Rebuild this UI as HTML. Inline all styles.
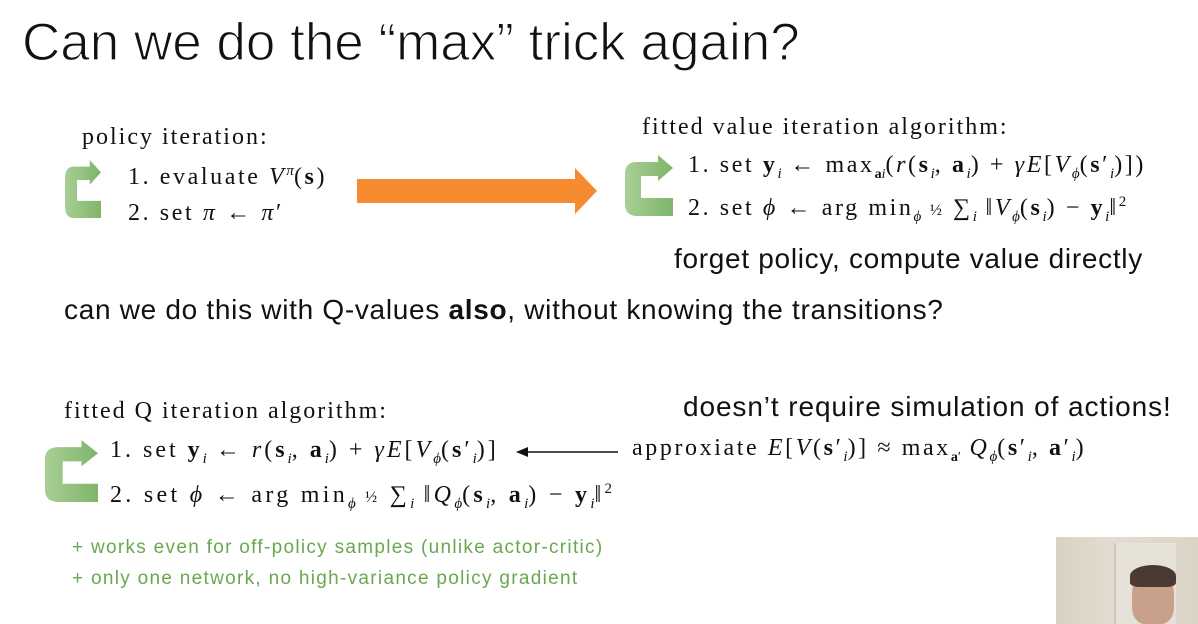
<!DOCTYPE html>
<html><head><meta charset="utf-8"><style>
body{margin:0;width:1198px;height:624px;background:#fff;position:relative;overflow:hidden;font-family:"Liberation Serif",serif;color:#111}
.a{position:absolute;white-space:nowrap}
.s{font-family:"Liberation Sans",sans-serif}
.m{font-size:24px;letter-spacing:2.6px}
.m sub,.m sup{letter-spacing:0}
.g{color:#6aa84f;font-family:"Liberation Sans",sans-serif;font-size:19px;letter-spacing:1.3px}
</style></head><body>
<svg width="0" height="0" style="position:absolute"><defs><linearGradient id="gr" x1="0" x2="1"><stop offset="0" stop-color="#a9cf95"/><stop offset="1" stop-color="#7fb46a"/></linearGradient></defs></svg>
<div class="a s" style="left:22px;top:12px;font-size:53px;color:#111;-webkit-text-stroke:1.2px #fff">Can we do the “max” trick again?</div>

<svg class="a" style="left:65px;top:160px" width="36" height="58" viewBox="0 0 48 61" preserveAspectRatio="none"><path d="M14 7 L33 7 L33 0 L48 13 L33 26 L33 21 L16 21 L16 43 L48 43 L48 61 L12 61 Q0 61 0 49 L0 19 Q0 7 12 7 Z" fill="url(#gr)"/></svg>
<div class="a m" style="left:82px;top:124px;letter-spacing:2px">policy iteration:</div>
<div class="a m" style="left:128px;top:163px">1. evaluate <i>V</i><sup style="font-size:15px"><i>π</i></sup>(<b>s</b>)</div>
<div class="a m" style="left:128px;top:200px">2. set <i>π</i> ← <i>π</i>′</div>

<svg class="a" style="left:357px;top:168px" width="240" height="46"><path d="M0 11 L218 11 L218 0 L240 23 L218 46 L218 35 L0 35 Z" fill="#f58a2e"/></svg>

<svg class="a" style="left:625px;top:155px" width="48" height="61" viewBox="0 0 48 61" preserveAspectRatio="none"><path d="M14 7 L33 7 L33 0 L48 13 L33 26 L33 21 L16 21 L16 43 L48 43 L48 61 L12 61 Q0 61 0 49 L0 19 Q0 7 12 7 Z" fill="url(#gr)"/></svg>
<div class="a m" style="left:642px;top:114px;letter-spacing:2px">fitted value iteration algorithm:</div>
<div class="a m" style="left:688px;top:152px">1. set <b>y</b><sub style="font-size:15px"><i>i</i></sub> ← max<sub style="font-size:14px"><b>a</b><i>i</i></sub>(<i>r</i>(<b>s</b><sub style="font-size:15px"><i>i</i></sub>, <b>a</b><sub style="font-size:15px"><i>i</i></sub>) + <i>γE</i>[<i>V</i><sub style="font-size:15px"><i>ϕ</i></sub>(<b>s</b>′<sub style="font-size:15px"><i>i</i></sub>)])</div>
<div class="a m" style="left:688px;top:194px">2. set <i>ϕ</i> ← arg min<sub style="font-size:15px"><i>ϕ</i></sub> <span style="font-size:16px">½</span> ∑<sub style="font-size:15px"><i>i</i></sub> ‖<i>V</i><sub style="font-size:15px"><i>ϕ</i></sub>(<b>s</b><sub style="font-size:15px"><i>i</i></sub>) − <b>y</b><sub style="font-size:15px"><i>i</i></sub>‖<sup style="font-size:15px">2</sup></div>
<div class="a s" style="left:674px;top:243px;font-size:28px;letter-spacing:0.7px">forget policy, compute value directly</div>

<div class="a s" style="left:64px;top:294px;font-size:28px;letter-spacing:0.7px">can we do this with Q-values <b>also</b>, without knowing the transitions?</div>

<div class="a s" style="left:683px;top:391px;font-size:28px;letter-spacing:0.9px">doesn’t require simulation of actions!</div>
<div class="a m" style="left:64px;top:398px;letter-spacing:2px">fitted Q iteration algorithm:</div>
<svg class="a" style="left:45px;top:440px" width="53" height="62" viewBox="0 0 48 61" preserveAspectRatio="none"><path d="M14 7 L33 7 L33 0 L48 13 L33 26 L33 21 L16 21 L16 43 L48 43 L48 61 L12 61 Q0 61 0 49 L0 19 Q0 7 12 7 Z" fill="url(#gr)"/></svg>
<div class="a m" style="left:110px;top:437px;letter-spacing:3px">1. set <b>y</b><sub style="font-size:15px"><i>i</i></sub> ← <i>r</i>(<b>s</b><sub style="font-size:15px"><i>i</i></sub>, <b>a</b><sub style="font-size:15px"><i>i</i></sub>) + <i>γE</i>[<i>V</i><sub style="font-size:15px"><i>ϕ</i></sub>(<b>s</b>′<sub style="font-size:15px"><i>i</i></sub>)]</div>
<div class="a m" style="left:110px;top:481px;letter-spacing:3.3px">2. set <i>ϕ</i> ← arg min<sub style="font-size:15px"><i>ϕ</i></sub> <span style="font-size:16px">½</span> ∑<sub style="font-size:15px"><i>i</i></sub> ‖<i>Q</i><sub style="font-size:15px"><i>ϕ</i></sub>(<b>s</b><sub style="font-size:15px"><i>i</i></sub>, <b>a</b><sub style="font-size:15px"><i>i</i></sub>) − <b>y</b><sub style="font-size:15px"><i>i</i></sub>‖<sup style="font-size:15px">2</sup></div>
<svg class="a" style="left:516px;top:446px" width="102" height="12"><path d="M10 6 L102 6" stroke="#111" stroke-width="1.5"/><path d="M0 6 L12 1 L12 11 Z" fill="#111"/></svg>
<div class="a m" style="left:632px;top:435px;letter-spacing:2.6px">approxiate <i>E</i>[<i>V</i>(<b>s</b>′<sub style="font-size:15px"><i>i</i></sub>)] ≈ max<sub style="font-size:14px"><b>a</b>′</sub> <i>Q</i><sub style="font-size:15px"><i>ϕ</i></sub>(<b>s</b>′<sub style="font-size:15px"><i>i</i></sub>, <b>a</b>′<sub style="font-size:15px"><i>i</i></sub>)</div>

<div class="a g" style="left:72px;top:537px">+ works even for off-policy samples (unlike actor-critic)</div>
<div class="a g" style="left:72px;top:568px">+ only one network, no high-variance policy gradient</div>

<div class="a" style="left:1056px;top:537px;width:142px;height:87px;background:linear-gradient(90deg,#d8d2c4 0%,#e2ddd0 40%,#d9d4c6 100%)">
<div style="position:absolute;left:58px;top:6px;width:60px;height:81px;background:#e6e2d8;border-left:2px solid #cfc9bb"></div>
<div style="position:absolute;left:76px;top:32px;width:42px;height:55px;border-radius:45% 45% 30% 30%;background:#c9a08c"></div>
<div style="position:absolute;left:74px;top:28px;width:46px;height:22px;border-radius:50% 50% 20% 20%;background:#4a3a32"></div>
</div>
</body></html>
